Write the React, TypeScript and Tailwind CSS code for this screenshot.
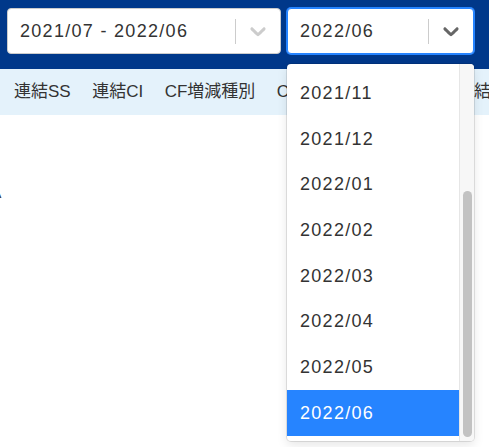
import React from "react";

const months = [
    "2021/07", "2021/08", "2021/09", "2021/10", "2021/11", "2021/12",
    "2022/01", "2022/02", "2022/03", "2022/04", "2022/05", "2022/06",
];

const navItems = ["連結SS", "連結CI", "CF増減種別", "CF精算表（間接法）", "連結BS"];

function Chevron({ color }: { color: string }) {
    return (
        <svg width="26" height="26" viewBox="0 0 20 20" fill={color}>
            <path d="M4.516 7.548c0.436-0.446 1.043-0.481 1.576 0l3.908 3.747 3.908-3.747c0.533-0.481 1.141-0.446 1.574 0 0.436 0.445 0.408 1.197 0 1.615-0.406 0.418-4.695 4.502-4.695 4.502-0.217 0.223-0.502 0.335-0.787 0.335s-0.57-0.112-0.789-0.335c0 0-4.287-4.084-4.695-4.502s-0.436-1.17 0-1.615z" />
        </svg>
    );
}

export default function App() {
    return (
        <div className="relative h-[447px] w-[489px] overflow-hidden bg-white font-['Liberation_Sans','Noto_Sans_CJK_JP',sans-serif] text-[#333]">
            {/* Header with the two selects */}
            <div className="flex h-[69px] gap-[6px] bg-[#00388a] pl-[7px] pt-[8px]">
                <div className="flex h-[46px] w-[274px] items-center rounded-[4px] border border-[#ccc] bg-white">
                    <div className="flex-1 pl-[12px] text-[18px] tracking-[1.3px]">2021/07 - 2022/06</div>
                    <div className="h-[25px] w-px bg-[#ccc]" />
                    <div className="px-[9px]">
                        <Chevron color="#cccccc" />
                    </div>
                </div>
                <div className="flex h-[46px] w-[187px] items-center rounded-[4px] border border-[#2684ff] bg-white shadow-[0_0_0_1px_#2684ff]">
                    <div className="flex-1 pl-[12px] text-[18px] tracking-[1.3px]">2022/06</div>
                    <div className="h-[25px] w-px bg-[#ccc]" />
                    <div className="px-[9px]">
                        <Chevron color="#666666" />
                    </div>
                </div>
            </div>

            {/* Tabs */}
            <nav className="flex h-[46px] items-center gap-[21.5px] overflow-hidden whitespace-nowrap bg-[#e4f2fb] pl-[14px] text-[17px]">
                {navItems.map((item) => (
                    <span key={item}>{item}</span>
                ))}
            </nav>

            <div className="-ml-[8px] pt-[71px] text-[14px] leading-[14px]">A</div>

            {/* Open menu */}
            <div className="absolute left-[287px] top-[64px] flex h-[377px] w-[187px] overflow-hidden rounded-[4px] bg-white shadow-[0_0_0_1px_rgba(0,0,0,0.1),0_4px_11px_rgba(0,0,0,0.1)]">
                <div className="flex flex-1 flex-col justify-end overflow-hidden pb-[5px]">
                    {months.map((m) => (
                        <div
                            key={m}
                            className={
                                m === "2022/06"
                                    ? "flex h-[45.7px] shrink-0 items-center bg-[#2684ff] pl-[13px] text-[18px] tracking-[1.3px] text-white"
                                    : "flex h-[45.7px] shrink-0 items-center pl-[13px] text-[18px] tracking-[1.3px]"
                            }
                        >
                            {m}
                        </div>
                    ))}
                </div>
                <div className="flex w-[15px] flex-col justify-end border-l border-[#e6e6e6] bg-[#f7f7f7] pb-[4px]">
                    <div className="mx-auto h-[246px] w-[9px] rounded-full bg-[#c2c2c2]" />
                </div>
            </div>
        </div>
    );
}
